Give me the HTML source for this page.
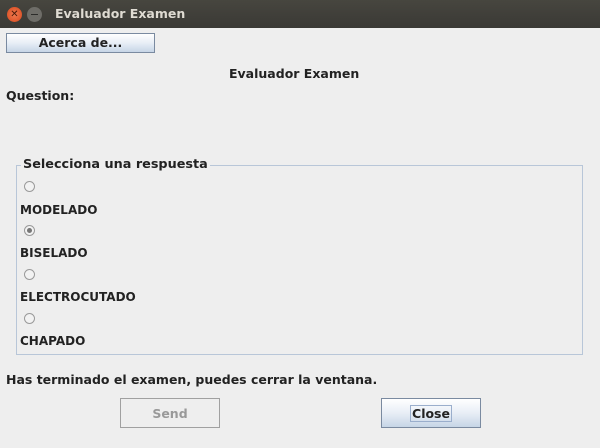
<!DOCTYPE html>
<html><head><style>
body{margin:0;width:600px;height:448px;background:#eeeeee;font-family:"DejaVu Sans","Liberation Sans",sans-serif;font-size:12px;font-weight:bold;color:#222;position:relative;overflow:hidden}
.a{position:absolute;white-space:nowrap}
.tb{position:absolute;left:0;top:0;width:600px;height:28px;background:linear-gradient(#47463f,#3a3935);}
.btn{position:absolute;box-sizing:border-box;border:1px solid #7a8aa0;background:linear-gradient(#ffffff,#e8eef6 50%,#c6d5e6);text-align:center;font-size:12.5px}
.r{position:absolute;width:11px;height:11px;border:1px solid #9a9a9a;border-radius:50%;background:#f2f2f2;box-sizing:border-box}
</style></head><body>
<div class="tb"></div>
<div class="a" style="left:7px;top:7px;width:15px;height:15px;border-radius:50%;background:radial-gradient(#f07a50,#d8481c);color:#4a1a08;font-size:10px;line-height:15px;text-align:center">✕</div>
<div class="a" style="left:27px;top:7px;width:15px;height:15px;border-radius:50%;background:#6e6d68;"><div style="position:absolute;left:4px;top:7px;width:7px;height:1px;background:#2c2c2a"></div></div>
<div class="a" style="left:55px;top:6px;color:#dfdbd2;font-size:12.5px;line-height:16px">Evaluador Examen</div>
<div class="btn" style="left:6px;top:33px;width:149px;height:20px;line-height:18px">Acerca de...</div>
<div class="a" style="left:229px;top:66px;font-size:12.5px">Evaluador Examen</div>
<div class="a" style="left:6px;top:88px;font-size:12.5px">Question:</div>
<div class="a" style="left:16px;top:165px;width:567px;height:190px;border:1px solid #b8c6d8;box-sizing:border-box"></div>
<div class="a" style="left:21px;top:157px;background:#eee;padding:0 2px;font-size:12.8px">Selecciona una respuesta</div>
<div class="r" style="left:24px;top:181px"></div>
<div class="a" style="left:20px;top:203px">MODELADO</div>
<div class="r" style="left:24px;top:225px"><div style="position:absolute;left:2px;top:2px;width:5px;height:5px;border-radius:50%;background:#777"></div></div>
<div class="a" style="left:20px;top:246px">BISELADO</div>
<div class="r" style="left:24px;top:269px"></div>
<div class="a" style="left:20px;top:290px">ELECTROCUTADO</div>
<div class="r" style="left:24px;top:313px"></div>
<div class="a" style="left:20px;top:334px">CHAPADO</div>
<div class="a" style="left:6px;top:372px;font-size:12.5px">Has terminado el examen, puedes cerrar la ventana.</div>
<div class="btn" style="left:120px;top:398px;width:100px;height:30px;line-height:30px;background:#eee;border-color:#a0a0a0;color:#999">Send</div>
<div class="btn" style="left:381px;top:398px;width:100px;height:30px;line-height:30px"><span style="border:1px solid #9aaecc;padding:0 1px">Close</span></div>
</body></html>
